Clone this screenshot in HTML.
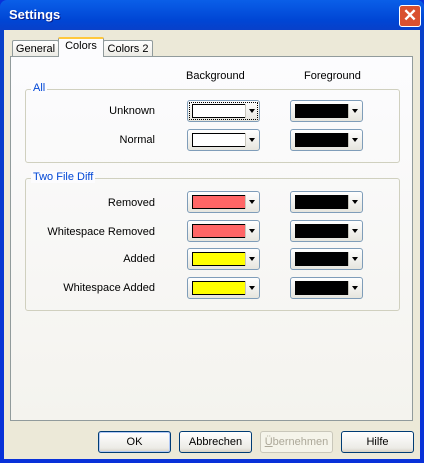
<!DOCTYPE html><html><head><style>
body{margin:0;width:424px;height:463px;overflow:hidden;font-family:Tahoma,"Liberation Sans",sans-serif;font-size:11px;background:#0831d9}
.win{position:absolute;left:0;top:0;width:424px;height:463px;background:linear-gradient(#0a5fe8,#0046d5 20px,#0840c9 30px,#0831d9);border-radius:7px 7px 0 0}
.title{position:absolute;left:9px;top:7px;color:#fff;font-weight:bold;font-size:13px;text-shadow:1px 1px #0a1e8a}
.x{position:absolute;left:399px;top:5px;width:20px;height:20px;background:#d9502f;border:1px solid #fff;border-radius:3px;color:#fff;font-size:17px;line-height:20px;text-align:center;font-weight:bold}
.client{position:absolute;left:4px;top:30px;width:416px;height:429px;background:#ece9d8}
.panel{position:absolute;left:10px;top:56px;width:403px;height:365px;border:1px solid #919b9c;background:linear-gradient(#fcfcfe,#f4f3ee);box-sizing:border-box}
.tab{position:absolute;top:40px;height:16px;border:1px solid #919b9c;border-bottom:none;background:linear-gradient(#fff,#ecebe5);box-sizing:border-box;border-radius:2px 2px 0 0;white-space:nowrap;text-align:center;line-height:16px}
.tab.sel{top:37px;height:20px;background:#fcfcfe;border-top:2px solid #ffc83c;line-height:15px}
.grp{position:absolute;left:25px;width:375px;border:1px solid #d0d0bf;border-radius:3px;box-sizing:border-box}
.gl{position:absolute;left:5px;top:-8px;background:#fcfcfe;color:#0046d5;padding:0 2px}
.lbl{position:absolute;right:269px;text-align:right;white-space:nowrap}
.cb{position:absolute;width:73px;height:22px;border:1px solid #7f9db9;border-radius:3px;box-sizing:border-box;background:linear-gradient(#fff,#e6e5de)}
.cb .sw{position:absolute;left:4px;top:3px;width:52px;height:12px;border:1px solid #000}
.cb .ar{position:absolute;right:4px;top:8px;width:0;height:0;border:3px solid transparent;border-top:4px solid #000}
.cb .sp{position:absolute;right:13px;top:3px;width:1px;height:14px;background:#c8c6bc}
.h{position:absolute;top:70px}
.btn{position:absolute;top:431px;width:73px;height:22px;border:1px solid #003c74;border-radius:3px;box-sizing:border-box;background:linear-gradient(#fff,#ecebe6 80%,#d6d0c5);text-align:center;line-height:20px}
</style></head><body>
<div class="win"><div class="title">Settings</div><div class="x">✕</div>
<div class="client"></div></div>
<div class="panel"></div>
<div class="tab" style="left:12px;width:47px">General</div>
<div class="tab" style="left:103px;width:50px">Colors 2</div>
<div class="tab sel" style="left:58px;width:46px">Colors</div>
<div class="h" style="left:186px">Background</div>
<div class="h" style="left:304px">Foreground</div>
<div class="grp" style="top:89px;height:74px"><span class="gl">All</span></div>
<div class="grp" style="top:178px;height:133px"><span class="gl">Two File Diff</span></div>
<div class="lbl" style="top:105px">Unknown</div>
<div class="lbl" style="top:134px">Normal</div>
<div class="lbl" style="top:197px">Removed</div>
<div class="lbl" style="top:226px">Whitespace Removed</div>
<div class="lbl" style="top:253px">Added</div>
<div class="lbl" style="top:282px">Whitespace Added</div>
<div class="cb" style="left:187px;top:100px;outline:1px dotted #000;outline-offset:-3px"><div class="sw" style="background:#fff"></div><div class="sp"></div><div class="ar"></div></div>
<div class="cb" style="left:187px;top:129px"><div class="sw" style="background:#fff"></div><div class="sp"></div><div class="ar"></div></div>
<div class="cb" style="left:187px;top:191px"><div class="sw" style="background:#ff6666"></div><div class="sp"></div><div class="ar"></div></div>
<div class="cb" style="left:187px;top:220px"><div class="sw" style="background:#ff6666"></div><div class="sp"></div><div class="ar"></div></div>
<div class="cb" style="left:187px;top:248px"><div class="sw" style="background:#ffff00"></div><div class="sp"></div><div class="ar"></div></div>
<div class="cb" style="left:187px;top:277px"><div class="sw" style="background:#ffff00"></div><div class="sp"></div><div class="ar"></div></div>
<div class="cb" style="left:290px;top:100px"><div class="sw" style="background:#000"></div><div class="sp"></div><div class="ar"></div></div>
<div class="cb" style="left:290px;top:129px"><div class="sw" style="background:#000"></div><div class="sp"></div><div class="ar"></div></div>
<div class="cb" style="left:290px;top:191px"><div class="sw" style="background:#000"></div><div class="sp"></div><div class="ar"></div></div>
<div class="cb" style="left:290px;top:220px"><div class="sw" style="background:#000"></div><div class="sp"></div><div class="ar"></div></div>
<div class="cb" style="left:290px;top:248px"><div class="sw" style="background:#000"></div><div class="sp"></div><div class="ar"></div></div>
<div class="cb" style="left:290px;top:277px"><div class="sw" style="background:#000"></div><div class="sp"></div><div class="ar"></div></div>
<div class="btn" style="left:98px;border-color:#003c74;box-shadow:inset 0 0 0 1px #b2c9f5">OK</div>
<div class="btn" style="left:179px">Abbrechen</div>
<div class="btn" style="left:260px;border-color:#c9c7ba;color:#aca899;background:#f5f4ea"><u>Ü</u>bernehmen</div>
<div class="btn" style="left:341px">Hilfe</div>
</body></html>
